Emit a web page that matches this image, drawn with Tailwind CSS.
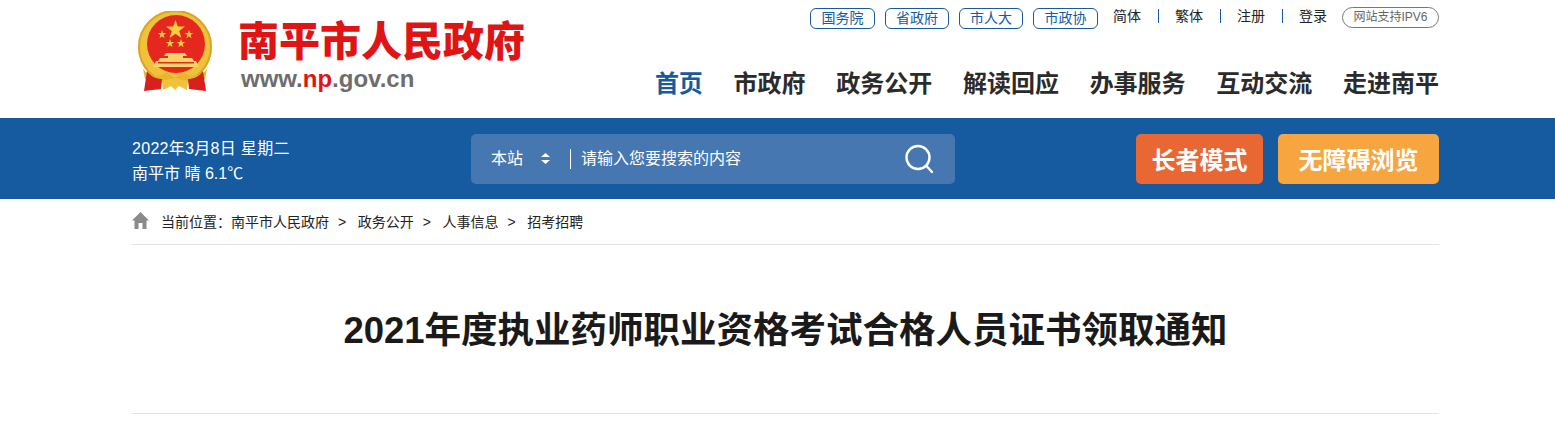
<!DOCTYPE html>
<html lang="zh-CN">
<head>
    <meta charset="UTF-8">
    <title>2021年度执业药师职业资格考试合格人员证书领取通知</title>
    <script src="https://cdn.jsdelivr.net/npm/@tailwindcss/browser@4"></script>
</head>
<body class="bg-white overflow-hidden font-['Liberation_Sans','Noto_Sans_CJK_SC',sans-serif] text-[#222]">
    <!-- header -->
    <header class="w-[1307px] h-[118px] ml-[132px] flex justify-between">
        <div class="flex pt-[11px]">
            <svg class="w-[76px] h-[80px] ml-[5px]" viewBox="0 0 76 80">
                <circle cx="38" cy="36" r="37" fill="#f0c23a"/>
                <circle cx="38" cy="36" r="36" fill="none" stroke="#dca52a" stroke-width="2"/>
                <circle cx="39" cy="33" r="29" fill="#e4281f"/>
                <polygon points="38.5,9 40.8,15.6 48,15.6 42.2,20 44.4,27 38.5,22.8 32.6,27 34.8,20 29,15.6 36.2,15.6" fill="#f4d03f"/>
                <polygon points="25,19 26,22 29.3,22 26.6,24 27.6,27.2 25,25.3 22.4,27.2 23.4,24 20.7,22 24,22" fill="#f4d03f"/>
                <polygon points="52,19 53,22 56.3,22 53.6,24 54.6,27.2 52,25.3 49.4,27.2 50.4,24 47.7,22 51,22" fill="#f4d03f"/>
                <polygon points="33,28 34,31 37.3,31 34.6,33 35.6,36.2 33,34.3 30.4,36.2 31.4,33 28.7,31 32,31" fill="#f4d03f"/>
                <polygon points="44,28 45,31 48.3,31 45.6,33 46.6,36.2 44,34.3 41.4,36.2 42.4,33 39.7,31 43,31" fill="#f4d03f"/>
                <path d="M29 42 H48 L50 45 H46 V47 H55 L57 50 H59 L62 56 H16 L19 50 H21 L23 47 H31 V45 H27 Z" fill="#f6d46a"/>
                <path d="M21 51 H57 V52.5 H21 Z" fill="#e4281f"/>
                <path d="M6 58 C12 66 22 67 30 61 L38 67 L46 61 C54 67 64 66 70 58 L68 68 L54 72 L38 70 L22 72 L8 68 Z" fill="#e9b52f"/>
                <path d="M10 60 C14 66 20 68 25 68 L24 78 L7 80 Z M66 60 C62 66 56 68 51 68 L52 78 L69 80 Z" fill="#d8201c"/>
                <path d="M25 70 L38 67 L51 70 L50 79 L42 75 L38 79 L34 75 L26 79 Z" fill="#f0c23a"/>
            </svg>
            <div class="ml-[25px]">
                <div class="w-[300px] h-[46px] mt-[4px] text-[41px] leading-[46px] font-black text-[#e01414] font-['Noto_Sans_CJK_SC',sans-serif]">南平市人民政府</div>
                <div class="ml-[3px] mt-[4px] text-[24px] leading-[27px] font-bold text-[#6d6d6d]">www.<span class="text-[#e01414]">np</span>.gov.cn</div>
            </div>
        </div>
        <div class="flex flex-col items-end">
            <div class="flex items-center h-[21px] mt-[8px] text-[14px]">
                <a class="w-[65px] h-[21px] mr-[10px] flex items-center justify-center rounded-[6px] border border-[#165a9f] text-[#165a9f]">国务院</a>
                <a class="w-[64px] h-[21px] mr-[10px] flex items-center justify-center rounded-[6px] border border-[#165a9f] text-[#165a9f]">省政府</a>
                <a class="w-[64px] h-[21px] mr-[10px] flex items-center justify-center rounded-[6px] border border-[#165a9f] text-[#165a9f]">市人大</a>
                <a class="w-[65px] h-[21px] mr-[15px] flex items-center justify-center rounded-[6px] border border-[#165a9f] text-[#165a9f]">市政协</a>
                <a class="-mt-[5px]">简体</a>
                <span class="w-px h-[14px] bg-[#165a9f] mx-[16.5px] -mt-[5px]"></span>
                <a class="-mt-[5px]">繁体</a>
                <span class="w-px h-[14px] bg-[#165a9f] mx-[16.5px] -mt-[5px]"></span>
                <a class="-mt-[5px]">注册</a>
                <span class="w-px h-[14px] bg-[#165a9f] mx-[16.5px] -mt-[5px]"></span>
                <a class="-mt-[5px]">登录</a>
                <span class="w-[97px] h-[21px] ml-[15px] -mt-[3px] flex items-center justify-center rounded-full border border-[#777] text-[#666] text-[12px]">网站支持IPV6</span>
            </div>
            <nav class="flex gap-[30.7px] mt-[38px] text-[24px] leading-[34px] font-bold text-[#2b2b2b]">
                <a class="text-[#165a9f]">首页</a>
                <a>市政府</a>
                <a>政务公开</a>
                <a>解读回应</a>
                <a>办事服务</a>
                <a>互动交流</a>
                <a>走进南平</a>
            </nav>
        </div>
    </header>

    <!-- blue bar -->
    <div class="h-[81px] bg-[#165a9f]">
        <div class="w-[1307px] ml-[132px] h-full flex items-center">
            <div class="w-[339px] pt-[5px] text-[16px] leading-[25px] text-white">
                <p class="tracking-[0.3px]">2022年3月8日 星期二</p>
                <p>南平市 晴 6.1℃</p>
            </div>
            <div class="w-[484px] h-[50px] flex items-center rounded-[5px] bg-[#4777b1] text-white text-[16px]">
                <span class="ml-[20px]">本站</span>
                <svg class="w-[9px] h-[11px] ml-[18px]" viewBox="0 0 9 11" fill="#fff">
                    <path d="M4.5 0 L9 4 H0 Z M0 7 H9 L4.5 11 Z"/>
                </svg>
                <span class="w-px h-[20px] bg-white ml-[20px]"></span>
                <span class="ml-[10px]">请输入您要搜索的内容</span>
                <svg class="w-[30px] h-[30px] ml-auto mr-[21px]" viewBox="0 0 30 30" fill="none" stroke="#fff" stroke-width="2.4" stroke-linecap="round">
                    <circle cx="14" cy="13.5" r="11.5"/>
                    <path d="M22.5 22 L28 28"/>
                </svg>
            </div>
            <a class="w-[127px] h-[50px] ml-auto pt-[5px] flex items-center justify-center rounded-[5px] bg-[#e96732] text-white text-[24px] font-bold">长者模式</a>
            <a class="w-[161px] h-[50px] ml-[15px] pt-[5px] flex items-center justify-center rounded-[5px] bg-[#f6a53f] text-white text-[24px] font-bold">无障碍浏览</a>
        </div>
    </div>

    <!-- breadcrumb -->
    <div class="w-[1307px] ml-[132px] h-[46px] pt-[1px] flex items-center border-b border-[#e3e3e3] text-[14px] text-[#222]">
        <svg class="w-[17px] h-[17px] mb-[3px]" viewBox="0 0 17 17" fill="#8a8a8a">
            <path d="M8.5 0 L17 8.5 H14.5 V17 H10.5 V11 H6.5 V17 H2.5 V8.5 H0 Z"/>
        </svg>
        <span class="ml-[12px]">当前位置：</span>
        <a>南平市人民政府</a>
        <span class="mx-[9px]">&gt;</span>
        <a class="ml-[2.6px]">政务公开</a>
        <span class="mx-[9px]">&gt;</span>
        <a class="ml-[2.6px]">人事信息</a>
        <span class="mx-[9px]">&gt;</span>
        <a class="ml-[2.6px]">招考招聘</a>
    </div>

    <!-- article title -->
    <div class="w-[1307px] ml-[132px] h-[169px] pt-[5px] flex items-center justify-center border-b border-[#e3e3e3]">
        <h1 class="text-[36.5px] font-bold text-[#1a1a1a]">2021年度执业药师职业资格考试合格人员证书领取通知</h1>
    </div>
</body>
</html>
